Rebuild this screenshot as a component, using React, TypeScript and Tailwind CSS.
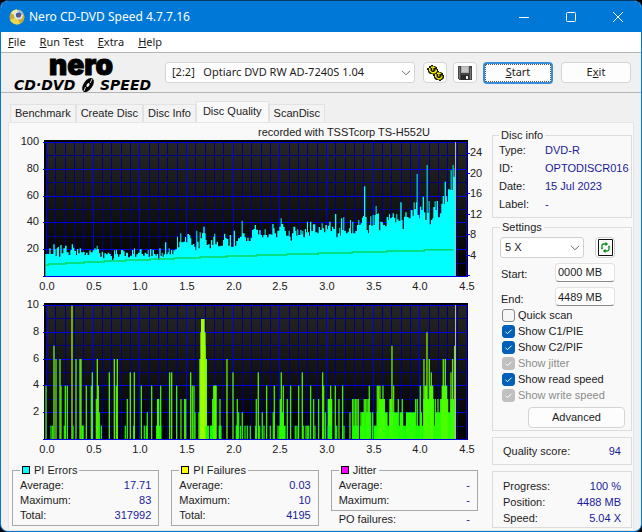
import type { ReactNode } from 'react';

type Pair = [number, number];

// Traces are stored on a fine grid, three steps to one chart unit.
// PIE: [position, top edge], each step runs on to the next position.
const pieTrace: Pair[] = [
  [136, 387], [148, 370], [152, 387], [160, 358], [164, 373], [167, 393], [170, 370], [173, 366], [177, 395],
  [181, 360], [185, 385], [190, 370], [195, 362], [200, 382], [206, 390], [211, 375], [215, 358], [219, 368],
  [223, 378], [228, 390], [231, 372], [235, 385], [239, 370], [243, 382], [249, 380], [254, 390], [258, 383],
  [263, 390], [268, 376], [272, 382], [278, 376], [283, 370], [287, 374], [290, 362], [293, 372], [297, 385],
  [301, 395], [305, 380], [309, 400], [313, 385], [318, 388], [323, 383], [328, 387], [332, 393], [336, 405],
  [340, 400], [342, 376], [346, 388], [348, 374], [351, 387], [354, 395], [358, 388], [363, 375], [370, 379],
  [374, 393], [378, 383], [384, 397], [390, 392], [396, 375], [400, 387], [402, 370], [405, 395], [409, 388],
  [414, 383], [419, 373], [425, 387], [429, 392], [434, 383], [439, 387], [443, 375], [446, 395], [450, 372],
  [454, 393], [458, 375], [462, 387], [467, 392], [470, 387], [474, 405], [478, 370], [482, 393], [485, 383],
  [488, 396], [491, 388], [495, 352], [499, 388], [503, 382], [506, 370], [509, 388], [513, 375], [517, 388],
  [520, 376], [526, 373], [531, 335], [534, 367], [538, 350], [541, 325], [544, 352], [550, 350], [555, 336],
  [558, 352], [562, 327], [567, 331], [571, 340], [574, 360], [579, 357], [583, 365], [586, 376], [589, 317],
  [592, 350], [596, 370], [599, 322], [602, 340], [606, 325], [610, 305], [614, 325], [617, 345], [620, 360],
  [625, 357], [629, 370], [633, 345], [637, 360], [640, 335], [643, 326], [646, 358], [650, 350], [654, 364],
  [660, 362], [669, 345], [672, 326], [676, 338], [680, 342], [685, 362], [689, 330], [693, 365], [701, 317],
  [705, 362], [709, 348], [714, 340], [720, 335], [725, 287], [728, 325], [734, 337], [738, 348], [742, 338],
  [746, 348], [752, 338], [756, 315], [760, 312], [764, 300], [768, 314], [774, 328], [778, 315], [782, 330],
  [786, 337], [790, 330], [794, 312], [797, 330], [801, 337], [806, 328], [815, 330], [817, 297], [821, 310],
  [824, 325], [828, 337], [832, 317], [838, 305], [842, 280], [845, 297], [850, 306], [854, 318], [858, 332],
  [866, 317], [869, 335], [872, 347], [876, 325], [880, 305], [886, 318], [889, 332], [892, 313], [895, 330],
  [901, 315], [905, 328], [907, 318], [910, 337], [915, 312], [918, 322], [921, 290], [924, 322], [927, 332],
  [930, 290], [934, 318], [939, 298], [946, 322], [952, 325], [956, 306], [960, 315], [965, 295], [968, 310],
  [972, 322], [976, 300], [981, 313], [984, 302], [988, 290], [992, 318], [996, 305], [1000, 312], [1005, 267],
  [1009, 337], [1013, 325], [1018, 308], [1021, 332], [1023, 280], [1027, 315], [1030, 277], [1033, 318],
  [1038, 325], [1043, 320], [1047, 310], [1050, 285], [1053, 325], [1057, 290], [1060, 325], [1066, 318],
  [1071, 300], [1075, 285], [1078, 300], [1082, 295], [1086, 278], [1089, 273], [1092, 184], [1096, 276],
  [1100, 315], [1104, 325], [1107, 300], [1111, 274], [1114, 302], [1118, 270], [1121, 300], [1124, 270],
  [1127, 243], [1130, 267], [1134, 265], [1137, 316], [1141, 290], [1146, 292], [1149, 300], [1155, 304],
  [1160, 276], [1165, 285], [1167, 267], [1170, 280], [1175, 276], [1178, 265], [1182, 278], [1186, 292],
  [1189, 267], [1192, 283], [1196, 288], [1201, 232], [1205, 285], [1208, 312], [1212, 275], [1216, 262],
  [1220, 276], [1226, 280], [1232, 255], [1238, 272], [1241, 232], [1244, 252], [1248, 232], [1250, 147],
  [1253, 270], [1258, 280], [1260, 245], [1264, 255], [1268, 215], [1272, 262], [1276, 285], [1280, 120],
  [1283, 263], [1286, 228], [1289, 298], [1293, 285], [1297, 280], [1300, 246], [1304, 229], [1307, 255],
  [1310, 228], [1314, 277], [1320, 265], [1324, 236], [1328, 213], [1332, 238], [1334, 170], [1338, 214],
  [1341, 230], [1344, 193], [1350, 195], [1352, 135], [1355, 195], [1358, 120], [1361, 155], [1364, 130],
];

const speedTrace: Pair[] = [
  [137, 421], [145, 417], [197, 414], [252, 411], [313, 408], [377, 405], [450, 402], [522, 399], [600, 396],
  [680, 393], [770, 390], [860, 387], [955, 384], [1057, 381], [1160, 378], [1273, 374],
];

// PIF: [position, count]
const pifThin: Pair[] = [
  [138, 4], [153, 1], [158, 1], [162, 7], [168, 6], [180, 6], [183, 4], [193, 1], [196, 4], [202, 4], [216, 10],
  [219, 1], [228, 6], [240, 6], [243, 6], [248, 1], [259, 4], [274, 4], [277, 5], [289, 3], [292, 6], [295, 4],
  [298, 2], [304, 1], [328, 5], [343, 6], [349, 4], [352, 6], [376, 1], [382, 3], [391, 5], [401, 1], [403, 5],
  [424, 4], [433, 1], [439, 1], [442, 2], [455, 4], [470, 1], [482, 4], [509, 5], [515, 5], [530, 4], [543, 3],
  [554, 3], [557, 3], [572, 5], [577, 4], [582, 4], [585, 2], [634, 1], [638, 3], [642, 4], [647, 4], [660, 3],
  [663, 1], [681, 6], [699, 5], [709, 1], [712, 3], [716, 2], [722, 1], [727, 2], [735, 1], [742, 1], [751, 1],
  [767, 1], [769, 3], [775, 5], [779, 1], [787, 2], [792, 1], [800, 4], [811, 1], [820, 2], [823, 4], [834, 1],
  [838, 1], [841, 3], [844, 5], [850, 4], [862, 3], [872, 4], [886, 1], [891, 1], [896, 4], [907, 5], [910, 1],
  [918, 1], [922, 1], [926, 1], [932, 4], [941, 3], [945, 1], [956, 3], [968, 5], [971, 4], [976, 2], [985, 3],
  [989, 3], [992, 4], [995, 3], [1006, 4], [1010, 1], [1017, 3], [1028, 4], [1032, 1], [1050, 2], [1058, 3],
  [1062, 3], [1067, 3], [1071, 3], [1075, 3], [1083, 2], [1088, 2], [1093, 3], [1097, 3], [1101, 3], [1105, 3],
  [1108, 4], [1112, 2], [1118, 2], [1132, 4], [1136, 4], [1140, 4], [1149, 4], [1176, 7], [1181, 4], [1195, 3],
  [1207, 3], [1247, 3], [1252, 3], [1261, 4], [1272, 6], [1281, 8], [1288, 6], [1294, 5], [1306, 3], [1314, 3],
  [1322, 3], [1330, 6], [1336, 6], [1353, 5], [1358, 6], [1364, 7],
];

// PIF: [from, to, count]
const pifWide: [number, number, number][] = [
  [470, 484, 1], [471, 478, 3], [595, 599, 2], [598, 621, 6], [601, 617, 8], [603, 614, 9], [614, 617, 7],
  [617, 627, 1], [630, 642, 1], [640, 650, 4], [656, 662, 1], [244, 251, 1], [708, 716, 1], [841, 857, 1],
  [841, 851, 2], [984, 996, 3], [983, 996, 1], [1058, 1076, 1], [1080, 1095, 1], [1084, 1094, 2],
  [1093, 1112, 1], [1098, 1110, 2], [1121, 1368, 1], [1130, 1163, 2], [1137, 1155, 3], [1168, 1194, 2],
  [1168, 1178, 3], [1199, 1210, 2], [1218, 1246, 2], [1260, 1266, 2], [1270, 1302, 3], [1273, 1282, 4],
  [1290, 1300, 4], [1305, 1368, 2], [1322, 1345, 3], [1325, 1342, 4], [1351, 1368, 3],
];

const xLabels = ['0.0', '0.5', '1.0', '1.5', '2.0', '2.5', '3.0', '3.5', '4.0', '4.5'];
const steps = (n: number) => Array.from({ length: n }, (_, i) => i);

function stepPath(points: Pair[], end: number) {
  const [first, ...rest] = points;
  return `M${first[0]} ${first[1]}` + rest.map(([x, y]) => `H${x}V${y}`).join('') + `H${end}`;
}

function Plot({ top, labels, children }: { top: number; labels: string[]; children: ReactNode }) {
  const gridX = (i: number) => Math.round(46 + i * 9.33);
  const gridY = (i: number) => Math.round(top + 2 + i * 13.4);
  return (
    <>
      <rect x="44" y={top} width="424" height="137" fill="#000" />
      <rect x="46" y={top + 2} width="420" height="134" fill="url(#plotShade)" />
      <g shapeRendering="crispEdges">
        {steps(46).map((i) => (
          <rect key={i} x={gridX(i)} y={top + 2} width="1" height="134" fill={i % 5 ? '#000080' : '#0000e8'} />
        ))}
        {steps(11).map((i) => (
          <rect key={i} x={i % 2 ? 45 : 43} y={gridY(i)} width={i % 2 ? 422 : 424} height="1" fill={i % 2 ? '#000080' : '#0000e8'} />
        ))}
      </g>
      {children}
      <rect x="455" y={top + 2} width="1" height="134" fill="#b4b4c0" />
      {labels.map((label, i) => (
        <text key={label} x="39" y={gridY(i * 2) + 3} textAnchor="end">{label}</text>
      ))}
      {xLabels.map((label, i) => (
        <text key={label} x={gridX(i * 5) + 1} y={top + 150} textAnchor="middle">{label}</text>
      ))}
    </>
  );
}

function PieChart() {
  return (
    <svg viewBox="12 123 473 172" className="block h-auto w-full fill-[#202020] font-['Liberation_Sans',sans-serif] text-[11px]" role="img" aria-label="PI Errors">
      <defs>
        <linearGradient id="plotShade" x1="0" y1="0" x2="0" y2="1">
          <stop offset="0" stopColor="#262626" />
          <stop offset="1" stopColor="#000" />
        </linearGradient>
      </defs>
      <text x="258" y="136">recorded with TSSTcorp TS-H552U</text>
      <Plot top={140} labels={['100', '80', '60', '40', '20']}>
        <g transform="translate(0 125) scale(.3333)">
          <path d={stepPath(pieTrace, 1368) + 'V453H136Z'} fill="#00ffff" />
          <path d={stepPath(speedTrace, 1360)} fill="none" stroke="#00d860" strokeWidth="4.500" />
        </g>
        {steps(7).map((i) => (
          <rect key={i} x="467" y={Math.round(275 - i * 20.4)} width="3" height="1" fill="#0000e8" />
        ))}
      </Plot>
      {['24', '20', '16', '12', '8', '4'].map((label, i) => (
        <text key={label} x="470" y={Math.round(156 + i * 20.6)}>{label}</text>
      ))}
    </svg>
  );
}

function PifChart() {
  const color = (count: number) => `hsl(${118 - count * 4} 100% 50%)`;
  return (
    <svg viewBox="12 295 473 169" className="block h-auto w-full fill-[#202020] font-['Liberation_Sans',sans-serif] text-[11px]" role="img" aria-label="PI Failures">
      <Plot top={303} labels={['10', '8', '6', '4', '2']}>
        <g transform="translate(0 292) scale(.3333)">
          {pifThin.map(([x, count], i) => (
            <rect key={i} x={x - 2} y={441 - count * 40} width="4" height={count * 40} fill={color(count)} opacity="0.9" />
          ))}
          {pifWide.map(([from, to, count], i) => (
            <rect key={i} x={from} y={441 - count * 40} width={to - from} height={count * 40} fill={color(count)} />
          ))}
        </g>
      </Plot>
    </svg>
  );
}

function DiscIcon() {
  return (
    <svg viewBox="0 0 16 16" className="size-4">
      <circle cx="8" cy="8" r="7.600" fill="#c8a93c" />
      <path d="M2 4A7.400 7.400 0 0 1 8 .6L8 8Z" fill="#f4eda0" />
      <path d="M1 11a7.400 7.400 0 0 0 10 3.700L8 8Z" fill="#e8d84c" />
      <circle cx="9.500" cy="6" r="4.600" fill="#dfe6ee" />
      <path d="M9.500 6V1.400A4.600 4.600 0 0 1 14 6Z" fill="#8fb8e0" />
      <circle cx="9.500" cy="6" r="2.600" fill="#2f5ba0" />
      <path d="M9 4.500l2.500 2.500-2 1Z" fill="#d04030" />
    </svg>
  );
}

function GearsIcon() {
  return (
    <svg viewBox="0 0 17 16" className="h-4 w-[17px]">
      <g fill="#1a1a0c">
        <path d="M2 1h2V0h2v1h2l1 1h1v2h1v3l-1 3H7L5 9H3L1 7V5H0V3h2Z" />
        <path d="M8 7h2V6h2v1h2l1 1h1v2h1v3l-2 2h-1v1h-2v-1H9l-2-2v-2H6V9h2Z" />
      </g>
      <g fill="#f2ea00">
        <path d="M2 3h1.500v2.500L5 7h2l1.500-1.500V4L10 5v1.500L8 8.500H5L2 6Z" />
        <path d="M4 1.500h3L8.500 3H4Z" />
        <path d="M8 9h1.500v2.500L11 13h2l1.500-1.500V10l1 1v1.500l-2 2H11L8 12Z" />
        <path d="M10 7.500h3L14.500 9H10Z" />
      </g>
      <path d="M5 3h1.500v2.500H5ZM11 9h1.500v2.500H11Z" fill="#c8b800" />
    </svg>
  );
}

function SaveIcon() {
  return (
    <svg viewBox="0 0 14 14" className="size-[14px]" shapeRendering="crispEdges">
      <path d="M0 0h14v14H1L0 13Z" fill="#444" />
      <path d="M3 0h8v7H3Z" fill="#aaa" />
      <path d="M4 1h6v5H4Z" fill="#c4c4c4" />
      <path d="M3 9h8v5H3Z" fill="#2a2a2a" />
      <path d="M8 10h2v3H8Z" fill="#eee" />
      <path d="M1 1h1v12H1ZM12 2h1v11h-1Z" fill="#777" />
    </svg>
  );
}

function RefreshIcon() {
  return (
    <svg viewBox="0 0 15 17" className="h-[17px] w-[15px]">
      <path d="M.5.500h14v16H.5Z" fill="#fff" stroke="#111" />
      <g fill="none" stroke="#0a8a1a" strokeWidth="1.300">
        <path d="M4 8.500V6.500Q4 5 6 5H8" />
        <path d="M11 8.500v2q0 1.500-2 1.500H7" />
      </g>
      <path d="M7.500 2.800v4.400l2.600-2.200ZM7.500 9.800v4.400L4.900 12ZM9.500 8.500h3L11 6.200ZM2.500 8.500h3L4 10.800Z" fill="#0a8a1a" />
    </svg>
  );
}

function Logo() {
  return (
    <svg viewBox="0 0 146 38" className="h-[38px] w-[146px] shrink-0 overflow-visible fill-black" role="img" aria-label="Nero CD-DVD Speed">
      <text x="38" y="21" className="stroke-black stroke-1 font-[Inter,sans-serif] text-[28px] font-black">nero</text>
      <g className="font-['DejaVu_Sans',sans-serif] text-[14px] font-bold italic">
        <text x="3" y="36">CD·DVD</text>
        <text x="89" y="36">SPEED</text>
      </g>
      <ellipse cx="77" cy="31" rx="4.500" ry="8" transform="rotate(35 77 31)" />
      <ellipse cx="77" cy="31" rx="1.200" ry="2.200" transform="rotate(35 77 31)" fill="#f0f0f0" />
      <path d="M73 37l1.500-4M81 25l-1.800 4" stroke="#f0f0f0" strokeWidth=".9" />
    </svg>
  );
}

function Chevron() {
  return (
    <svg viewBox="0 0 10 6" className="pointer-events-none absolute right-1 top-2 h-1.5 w-2.5 fill-none stroke-[#666]">
      <path d="M1 .8l4 4 4-4" />
    </svg>
  );
}

function Row({ label, value }: { label: string; value: string }) {
  return (
    <div className="flex justify-between">
      <dt>{label}</dt>
      <dd className="text-[#1a1a9c]">{value}</dd>
    </div>
  );
}

function Stats({ title, swatch, rows }: { title: string; swatch: string; rows: [string, string][] }) {
  return (
    <fieldset className="min-w-0 border border-[#a8a8a8] px-[7px] pb-0.5">
      <legend className="flex items-center gap-1 px-0.5 leading-3">
        <span className={`size-2 border border-black ${swatch}`} />
        {title}
      </legend>
      <dl className="pt-0.5 leading-[15px]">
        {rows.map(([label, value]) => (
          <Row key={label} label={label} value={value} />
        ))}
      </dl>
    </fieldset>
  );
}

function Check({ label, checked = false, disabled = false }: { label: string; checked?: boolean; disabled?: boolean }) {
  return (
    <label className={`flex h-4 items-center gap-[3px] ${disabled ? 'text-[#8c8c8c]' : ''}`}>
      <span className="relative size-[13px] shrink-0">
        <input
          type="checkbox"
          defaultChecked={checked}
          disabled={disabled}
          className="block size-[13px] appearance-none rounded-[3px] border border-[#888] bg-[#f6f6f6] checked:border-[#0060b8] checked:bg-[#0060b8] disabled:border-[#c0c0c0] disabled:bg-[#c0c0c0]"
        />
        {checked && (
          <svg viewBox="0 0 13 13" className="pointer-events-none absolute inset-0 fill-none stroke-white">
            <path d="M3.500 6.700l2 2 4-4" />
          </svg>
        )}
      </span>
      {label}
    </label>
  );
}

const tabs = ['Benchmark', 'Create Disc', 'Disc Info', 'Disc Quality', 'ScanDisc'];

// [mnemonic, rest of the label]
const menus: [string, string][] = [['F', 'ile'], ['R', 'un Test'], ['E', 'xtra'], ['H', 'elp']];

const discInfo: [string, string][] = [
  ['Type:', 'DVD-R'],
  ['ID:', 'OPTODISCR016'],
  ['Date:', '15 Jul 2023'],
  ['Label:', '-'],
];

export default function App() {
  return (
    <div className="flex min-h-screen flex-col bg-black font-['Liberation_Sans',Arial,sans-serif] text-[11px] text-[#1c1c1c]">
      <div className="flex flex-1 flex-col overflow-hidden rounded-lg border border-[#0078d7] border-t-[#0a3a66] bg-[#f0f0f0]">
        <header className="flex h-[31px] items-center bg-[#0078d7] pl-2 text-white">
          <DiscIcon />
          <h1 className="ml-1 flex-1 font-['Noto_Sans',sans-serif] text-[12px]">Nero CD-DVD Speed 4.7.7.16</h1>
          <button aria-label="Minimize" className="flex h-full w-[47px] items-center justify-center">
            <svg viewBox="0 0 10 10" className="size-2.5 stroke-white"><path d="M0 5.500h10" /></svg>
          </button>
          <button aria-label="Maximize" className="flex h-full w-[47px] items-center justify-center">
            <svg viewBox="0 0 10 10" className="size-2.5 fill-none stroke-white"><rect x=".5" y=".5" width="9" height="9" rx="1" /></svg>
          </button>
          <button aria-label="Close" className="flex h-full w-[47px] items-center justify-center">
            <svg viewBox="0 0 10 10" className="size-2.5 stroke-white"><path d="M0 0l10 10M10 0L0 10" /></svg>
          </button>
        </header>

        <nav className="flex h-5 items-center gap-3.5 bg-white pl-[7px] font-['Noto_Sans',sans-serif]">
          {menus.map(([key, rest]) => (
            <button key={key}>
              <span className="underline">{key}</span>
              {rest}
            </button>
          ))}
        </nav>

        <div className="flex h-[41px] items-center border-y border-[#b4b4b4] px-2.5 font-['Noto_Sans',sans-serif]">
          <Logo />
          <div className="relative ml-2 min-w-0 flex-1">
            <select aria-label="Drive" className="block h-[21px] w-full appearance-none rounded-[3px] border border-[#d4d4d4] bg-white px-1.5">
              <option>[2:2]&nbsp;&nbsp; Optiarc DVD RW AD-7240S 1.04</option>
            </select>
            <Chevron />
          </div>
          <button aria-label="Options" className="ml-2 flex h-[21px] w-6 items-center justify-center rounded border border-[#d4d4d4] bg-[#fdfdfd]">
            <GearsIcon />
          </button>
          <button aria-label="Save" className="ml-1.5 flex h-[21px] w-6 items-center justify-center rounded border border-[#d4d4d4] bg-[#fdfdfd]">
            <SaveIcon />
          </button>
          <button className="ml-1.5 h-[22px] w-[70px] rounded border-2 border-[#3a8ed8] bg-[#fdfdfd]">
            <span className="flex h-full items-center justify-center border border-dotted border-[#555]">
              <span><span className="underline">S</span>tart</span>
            </span>
          </button>
          <button className="ml-2 h-[21px] w-[70px] rounded border border-[#d4d4d4] bg-[#fdfdfd]">
            E<span className="underline">x</span>it
          </button>
        </div>

        <div className="flex flex-1 flex-col px-[7px] pt-2">
          <div role="tablist" className="flex items-end pl-0.5">
            {tabs.map((tab) => (
              <button
                key={tab}
                role="tab"
                aria-selected={tab === 'Disc Quality'}
                className="h-[18px] border border-b-0 border-[#e2e2e2] bg-[#f3f3f3] px-1 aria-selected:h-[21px] aria-selected:bg-[#f9f9f9] aria-selected:px-1.5 aria-selected:pb-0.5"
              >
                {tab}
              </button>
            ))}
          </div>

          <main className="flex flex-1 gap-[7px] border border-[#e6e6e6] bg-[#f9f9f9] pl-[3px] pr-px">
            <div className="min-w-0 flex-1">
              <PieChart />
              <PifChart />
              <div className="grid grid-cols-3 items-start gap-3 pr-[7px]">
                <Stats title="PI Errors" swatch="bg-[#00ffff]" rows={[['Average:', '17.71'], ['Maximum:', '83'], ['Total:', '317992']]} />
                <Stats title="PI Failures" swatch="bg-[#ffff00]" rows={[['Average:', '0.03'], ['Maximum:', '10'], ['Total:', '4195']]} />
                <div>
                  <Stats title="Jitter" swatch="bg-[#ff00ff]" rows={[['Average:', '-'], ['Maximum:', '-']]} />
                  <dl className="px-2 pt-0.5 leading-3">
                    <Row label="PO failures:" value="-" />
                  </dl>
                </div>
              </div>
            </div>

            <aside className="w-[140px] shrink-0 pt-1.5">
              <fieldset className="border border-[#dcdcdc] pb-1 pl-1.5">
                <legend className="px-0.5 leading-3">Disc info</legend>
                <dl className="grid grid-cols-[46px_auto] leading-[18px]">
                  {discInfo.map(([label, value]) => (
                    <div key={label} className="contents">
                      <dt>{label}</dt>
                      <dd className="text-[#1a1a9c]">{value}</dd>
                    </div>
                  ))}
                </dl>
              </fieldset>

              <fieldset className="mt-[3px] border border-[#dcdcdc] pb-0.5 pl-[7px] pr-1.5 pt-1">
                <legend className="px-0.5 leading-3">Settings</legend>
                <div className="flex items-center justify-between pr-2.5">
                  <div className="relative w-[84px]">
                    <select aria-label="Speed" className="block h-[21px] w-full appearance-none rounded-[3px] border border-[#d0d0d0] bg-white px-1">
                      <option>5 X</option>
                    </select>
                    <Chevron />
                  </div>
                  <button aria-label="Refresh" className="flex h-[21px] w-5 items-center justify-center rounded border border-[#d0d0d0] bg-[#fdfdfd]">
                    <RefreshIcon />
                  </button>
                </div>
                <div className="mt-1 flex flex-col gap-1 pl-px pr-2.5">
                  <div className="flex items-center justify-between">
                    <label htmlFor="start" className="pt-1">Start:</label>
                    <input id="start" defaultValue="0000 MB" className="h-[19px] w-[60px] rounded-sm border border-[#e2e2e2] border-b-[#888] bg-white px-0.5" />
                  </div>
                  <div className="flex items-center justify-between">
                    <label htmlFor="end" className="pt-1">End:</label>
                    <input id="end" defaultValue="4489 MB" className="h-[19px] w-[60px] rounded-sm border border-[#e2e2e2] border-b-[#888] bg-white px-0.5" />
                  </div>
                </div>
                <div className="pl-0.5">
                  <Check label="Quick scan" />
                  <Check label="Show C1/PIE" checked />
                  <Check label="Show C2/PIF" checked />
                  <Check label="Show jitter" checked disabled />
                  <Check label="Show read speed" checked />
                  <Check label="Show write speed" checked disabled />
                </div>
                <button className="ml-auto mt-1 block h-[21px] w-[97px] rounded border border-[#d4d4d4] bg-[#fdfdfd]">Advanced</button>
              </fieldset>

              <dl className="mt-1.5 border border-[#dcdcdc] px-2.5 leading-[26px]">
                <Row label="Quality score:" value="94" />
              </dl>
              <dl className="mt-1.5 border border-[#dcdcdc] px-2.5 pb-px pt-1.5 leading-4">
                <Row label="Progress:" value="100 %" />
                <Row label="Position:" value="4488 MB" />
                <Row label="Speed:" value="5.04 X" />
              </dl>
            </aside>
          </main>
        </div>
      </div>
    </div>
  );
}
